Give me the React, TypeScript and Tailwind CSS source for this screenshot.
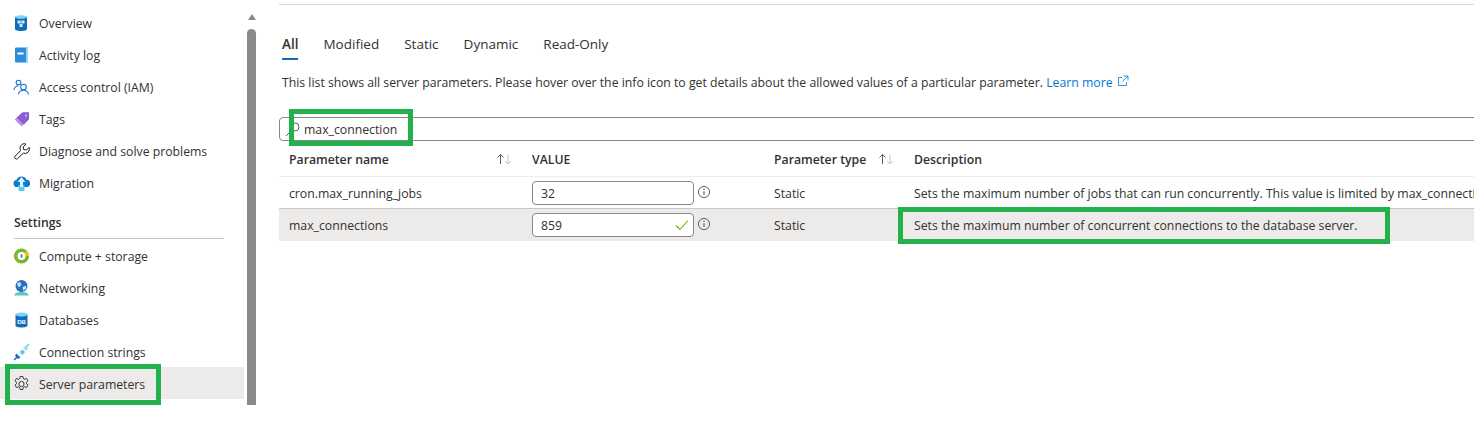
import React from "react";

function Ic({ children }: { children: React.ReactNode }) {
  return (
    <svg width="18" height="18" viewBox="0 0 18 18" className="shrink-0" fill="none">
      {children}
    </svg>
  );
}

const OverviewIcon = () => (
  <Ic>
    <path d="M4 3h12v12c0 1.100-2.700 2-6 2s-6-.9-6-2z" fill="#0f6cbd" transform="translate(-1 0)" />
    <ellipse cx="9" cy="3" rx="6" ry="1.800" fill="#7fd3f0" />
    <path d="M5.500 6.500h3.200v3H5.500zM9.300 6.500h3.200v3H9.300zM7.500 10h3v3h-3z" fill="#cfeaf8" />
  </Ic>
);
const LogIcon = () => (
  <Ic>
    <rect x="3" y="1.500" width="13" height="15" rx="1.200" fill="#2a8fd8" />
    <rect x="14" y="1.500" width="2" height="15" fill="#9fd0f2" />
    <rect x="5.500" y="6.500" width="6" height="2" fill="#fff" />
  </Ic>
);
const IamIcon = () => (
  <Ic>
    <circle cx="6.500" cy="4.500" r="2.300" stroke="#1a73c8" strokeWidth="1.100" />
    <path d="M2 12c.2-2.500 1.700-4 4.500-4" stroke="#1a73c8" strokeWidth="1.100" />
    <circle cx="11.500" cy="9" r="2.800" stroke="#1a73c8" strokeWidth="1.100" />
    <path d="M6.500 16.500c.3-2.600 2.200-4.200 5-4.200s4.700 1.600 5 4.200" stroke="#1a73c8" strokeWidth="1.100" />
  </Ic>
);
const TagIcon = () => (
  <Ic>
    <path d="M3 9.500 10.500 2.500H17v6.500l-7.500 7z" fill="#7b43c6" />
    <path d="M3 9.500 5 7.500l7 7-2.500 1.500z" fill="#b593e8" />
    <path d="M5 7.500 10.500 2.500H17v6.500l-5 5.500z" fill="#8d5cd8" />
    <circle cx="14" cy="5.500" r="1" fill="#e5d6f7" />
  </Ic>
);
const WrenchIcon = () => (
  <Ic>
    <path
      d="M12.300 1.800a4.700 4.700 0 0 1 1.700.3L11.300 4.800l.4 2.800 2.800.4 2.700-2.700a4.600 4.600 0 0 1-5.900 5.900l-5.600 5.300a1.700 1.700 0 0 1-2.500-2.400l5.400-5.600a4.600 4.600 0 0 1 3.700-6.900z"
      stroke="#201f1e"
      strokeWidth="1"
      strokeLinejoin="round"
    />
  </Ic>
);
const MigrationIcon = () => (
  <Ic>
    <path d="M5.500 13a3.500 3.500 0 0 1-.9-7 5.200 5.200 0 0 1 9.800-.3 3.600 3.600 0 0 1 .2 7.300z" fill="#0f78c9" />
    <path d="M6.500 11h6v6h-6z" fill="#5ccdf2" />
    <path d="M9.500 3 5.500 8h2.500v5h3V8h2.500z" fill="#dff4fc" />
  </Ic>
);
const ComputeIcon = () => (
  <Ic>
    <circle cx="9.500" cy="9" r="5.800" stroke="#76b82a" strokeWidth="3.600" />
    <path d="M15.300 9a5.800 5.800 0 0 0-1.800-4.200" stroke="#f2c230" strokeWidth="3.600" />
    <path d="M9.500 7.500v3" stroke="#3b5b6b" strokeWidth="1.600" />
  </Ic>
);
const NetIcon = () => (
  <Ic>
    <path d="M2 16.500c1-2.500 3-3.500 7.500-3.500s6.500 1 7.500 3.500z" fill="#5cc8b8" />
    <circle cx="9.500" cy="7" r="6" fill="#2a6fc4" />
    <path d="M5 4.500 8 2.800 9.500 6 6.500 8.500zM10.500 8l3.500-1.200.3 2.700-3 2.300z" fill="#bfe6f7" />
  </Ic>
);
const DbIcon = () => (
  <Ic>
    <path d="M3.500 3.500h12v11c0 1.200-2.700 2-6 2s-6-.8-6-2z" fill="#0f6cbd" />
    <ellipse cx="9.500" cy="3.500" rx="6" ry="2" fill="#7fd3f0" />
    <text x="9.500" y="12.500" textAnchor="middle" fontSize="6" fontWeight="700" fill="#fff" fontFamily="Liberation Sans, sans-serif">DB</text>
  </Ic>
);
const PlugIcon = () => (
  <Ic>
    <path d="M2 17l4-3.500" stroke="#0f6cbd" strokeWidth="1.500" />
    <path d="M4.500 10.500l4 4-2.500 1.500-3-3z" fill="#1a73c8" />
    <path d="M7.500 9 10.500 6.500l2.500 2.500-2.500 3z" fill="#5cc8ec" />
    <path d="M11 5l3-2.500 2.500 2.500L14 8z" fill="#9fe0f5" />
    <path d="M14.500 3.500 17 1" stroke="#5cc8ec" strokeWidth="1.500" />
  </Ic>
);
const GearIcon = () => (
  <Ic>
    <path
      d="M8.100 1.500h2.800l.4 2.100 1.300.7 2-.8 1.400 2.400-1.600 1.400v1.400l1.600 1.400-1.400 2.400-2-.8-1.300.7-.4 2.100H8.100l-.4-2.100-1.300-.7-2 .8-1.400-2.400 1.600-1.400V7.300L3 5.900l1.400-2.400 2 .8 1.300-.7z"
      stroke="#3b3a39"
      strokeWidth="1"
      strokeLinejoin="round"
    />
    <circle cx="9.500" cy="9" r="2.600" stroke="#3b3a39" strokeWidth="1" />
  </Ic>
);
const Info = () => (
  <svg width="14" height="14" viewBox="0 0 14 14" fill="none" className="ml-[3px] mt-[-2px] shrink-0">
    <circle cx="7" cy="7" r="5.600" stroke="#605e5c" strokeWidth="1" />
    <path d="M7 6.200v3.600" stroke="#605e5c" strokeWidth="1.200" />
    <circle cx="7" cy="4.300" r=".8" fill="#605e5c" />
  </svg>
);
const Sort = () => (
  <svg width="17" height="12" viewBox="0 0 17 12" fill="none" className="shrink-0">
    <path d="M4.500 11V1.500M1.500 4.500l3-3 3 3" stroke="#605e5c" strokeWidth="1" />
    <path d="M12 1.500V11M9 8l3 3 3-3" stroke="#c8c6c4" strokeWidth="1" />
  </svg>
);
const Green = ({ className }: { className: string }) => (
  <div className={"absolute border-[5px] border-[#22b14c] pointer-events-none " + className} />
);

const top = [
  ["Overview", <OverviewIcon key="a" />],
  ["Activity log", <LogIcon key="b" />],
  ["Access control (IAM)", <IamIcon key="c" />],
  ["Tags", <TagIcon key="d" />],
  ["Diagnose and solve problems", <WrenchIcon key="e" />],
  ["Migration", <MigrationIcon key="f" />],
] as const;
const settings = [
  ["Compute + storage", <ComputeIcon key="a" />],
  ["Networking", <NetIcon key="b" />],
  ["Databases", <DbIcon key="c" />],
  ["Connection strings", <PlugIcon key="d" />],
] as const;

function Item({ label, icon, active, lower }: { label: string; icon: React.ReactNode; active?: boolean; lower?: boolean }) {
  return (
    <div className={"flex h-8 items-center pl-3 " + (lower ? "pt-[2px] " : "") + (active ? "bg-[#edebe9]" : "")}>
      {icon}
      <span className="ml-[9px] pt-[2px] text-[#323130]">{label}</span>
    </div>
  );
}

export default function App() {
  return (
    <div className="relative flex h-[434px] w-[1474px] overflow-hidden bg-white font-['Open_Sans',sans-serif] text-[12.25px] text-[#323130]">
      <aside className="w-[244px] shrink-0 pt-[7px]">
        {top.map(([l, i]) => (
          <Item key={l} label={l} icon={i} />
        ))}
        <div className="mx-[14px] mt-[15px] h-[25px] w-[210px] border-b border-[#c8c6c4] font-semibold">Settings</div>
        {settings.map(([l, i]) => (
          <Item key={l} label={l} icon={i} lower />
        ))}
        <Item label="Server parameters" icon={<GearIcon />} active lower />
      </aside>
      <div className="ml-[3px] flex h-[405px] w-[9px] shrink-0 flex-col items-center">
        <div className="mt-[14px] h-0 w-0 border-x-[4.500px] border-b-[6px] border-x-transparent border-b-[#8a8a8a]" />
        <div className="mt-[9px] w-full flex-1 rounded-t-[5px] bg-[#8a8a8a]" />
      </div>
      <main className="ml-[23px] min-w-0 flex-1">
        <div className="mt-1 h-px bg-[#d8d8d8]" />
        <nav className="mt-[29px] flex h-[26px] gap-[25px] pl-[3px] text-[13.500px]">
          <div className="h-[26px] border-b-2 border-[#0f6cbd] font-semibold">All</div>
          <div>Modified</div>
          <div>Static</div>
          <div>Dynamic</div>
          <div>Read-Only</div>
        </nav>
        <p className="mt-[14px] h-[18px] whitespace-nowrap pl-[3px] leading-[18px]">
          This list shows all server parameters. Please hover over the info icon to get details about the allowed values of a particular parameter.{" "}
          <span className="text-[#0078d4]">Learn more</span>
          <svg width="12" height="12" viewBox="0 0 12 12" fill="none" className="ml-1 inline-block align-[0px]">
            <path d="M5 2.500H1.500v8h8V7M6.500 1h4.500v4.500M11 1 5.500 6.500" stroke="#0078d4" strokeWidth=".8" />
          </svg>
        </p>
        <div className="-mr-1 mt-[25px] flex h-[24px] items-center rounded-sm border border-[#8a8886] pl-[5px]">
          <svg width="15" height="15" viewBox="0 0 15 15" fill="none" className="mr-[4px] shrink-0">
            <circle cx="10" cy="5" r="4" stroke="#605e5c" strokeWidth="1" />
            <path d="M7 8 1 14" stroke="#605e5c" strokeWidth="1" />
          </svg>
          <span className="pt-[2px]">max_connection</span>
        </div>
        <div className="grid grid-cols-[243px_242px_140px_1fr]">
          <div className="flex h-9 items-center justify-between border-b border-[#edebe9] pl-[10px] pr-[9px] font-semibold">
            <span className="pt-[3px]">Parameter name</span> <Sort />
          </div>
          <div className="flex h-9 items-center border-b border-[#edebe9] pl-[10px] pt-[3px] font-semibold">VALUE</div>
          <div className="flex h-9 items-center justify-between border-b border-[#edebe9] pl-[10px] pr-[9px] font-semibold">
            <span className="pt-[3px]">Parameter type</span> <Sort />
          </div>
          <div className="flex h-9 items-center border-b border-[#edebe9] pl-[10px] pt-[3px] font-semibold">Description</div>

          <div className="flex h-8 items-center border-b border-[#c8c6c4] pl-[10px] pt-[3px]">cron.max_running_jobs</div>
          <div className="flex h-8 items-center border-b border-[#c8c6c4] pl-[10px]">
            <div className="flex h-6 w-[162px] items-center rounded-sm border border-[#8a8886] bg-white pl-2 pt-[3px]">32</div>
            <Info />
          </div>
          <div className="flex h-8 items-center border-b border-[#c8c6c4] pl-[10px] pt-[3px]">Static</div>
          <div className="flex h-8 items-center overflow-hidden whitespace-nowrap border-b border-[#c8c6c4] pl-[10px] pt-[3px]">
            Sets the maximum number of jobs that can run concurrently. This value is limited by max_connections
          </div>

          <div className="flex h-8 items-center bg-[#edebe9] pl-[10px] pt-[2px]">max_connections</div>
          <div className="flex h-8 items-center bg-[#edebe9] pl-[10px]">
            <div className="flex h-6 w-[162px] items-center justify-between rounded-sm border border-[#8a8886] bg-white pl-2 pr-[4px]">
              <span className="pt-[2px]">859</span>
              <svg width="14" height="12" viewBox="0 0 14 12" fill="none">
                <path d="M1 6.500 5 10.500 13 1.500" stroke="#6bb700" strokeWidth="1.100" />
              </svg>
            </div>
            <Info />
          </div>
          <div className="flex h-8 items-center bg-[#edebe9] pl-[10px] pt-[2px]">Static</div>
          <div className="flex h-8 items-center whitespace-nowrap bg-[#edebe9] pl-[10px] pt-[2px]">
            Sets the maximum number of concurrent connections to the database server.
          </div>
        </div>
      </main>
      <Green className="left-[5px] top-[364px] h-[41px] w-[156px]" />
      <Green className="left-[289px] top-[109px] h-[37px] w-[124px]" />
      <Green className="left-[898px] top-[207px] h-[37px] w-[492px]" />
    </div>
  );
}
